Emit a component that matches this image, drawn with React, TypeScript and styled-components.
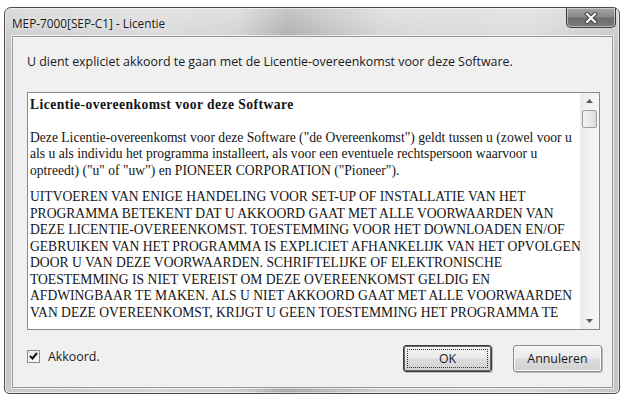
import React from "react";
import styled, { createGlobalStyle } from "styled-components";

const Global = createGlobalStyle`
  html, body { margin: 0; padding: 0; background: #ffffff; overflow: hidden; }
  #root { width: 623px; height: 395px; }
`;

const uiFont = `"Open Sans", "Noto Sans", "DejaVu Sans", sans-serif`;
const serifFont = `"Liberation Serif", "Times New Roman", serif`;

const Window = styled.div`
  box-sizing: border-box;
  margin: 7px 0 0 4px;
  width: 616px;
  height: 387px;
  border: 1px solid #4c4c4c;
  border-radius: 7px 7px 5px 5px;
  background:
    linear-gradient(180deg, rgba(255,255,255,0.35) 0%, rgba(255,255,255,0) 40px),
    linear-gradient(90deg, #c9c9c9 0%, #d6d6d6 25%, #cfcfcf 38%, #a9a9a9 46%, #b9b9b9 52%, #d3d3d3 62%, #d8d8d8 85%, #c6c6c6 100%);
  box-shadow: inset 0 0 0 1px rgba(255,255,255,0.55);
  display: flex;
  flex-direction: column;
  padding: 0 6px 5px 7px;
`;

const TitleBar = styled.div`
  height: 28px;
  display: flex;
  align-items: flex-start;
  justify-content: space-between;
  margin-right: -3px;
`;

const Title = styled.span`
  font-family: ${uiFont};
  font-size: 11.8px;
  color: #1a1a1a;
  padding-top: 7px;
  text-shadow: 0 0 6px rgba(255,255,255,0.9);
`;

const CloseButton = styled.div`
  width: 50px;
  height: 20px;
  box-sizing: border-box;
  border: 1px solid #3e3e3e;
  border-top: none;
  border-radius: 0 0 5px 5px;
  background: linear-gradient(180deg, #a4a4a4 0%, #8a8a8a 45%, #6c6c6c 55%, #7c7c7c 100%);
  box-shadow: inset 0 0 0 1px rgba(255,255,255,0.45);
  display: flex;
  align-items: center;
  justify-content: center;
`;

const Client = styled.div`
  flex: 1;
  box-sizing: border-box;
  border: 1px solid #9a9a9a;
  background: #f0f0f0;
  box-shadow: 0 0 0 1px rgba(255,255,255,0.6);
  display: flex;
  flex-direction: column;
  padding: 17px 12px 0 14px;
`;

const Intro = styled.div`
  font-family: ${uiFont};
  font-size: 12.4px;
  line-height: 16px;
  color: #1a1a1a;
  margin-bottom: 22px;
`;

const TextBox = styled.div`
  box-sizing: border-box;
  height: 238px;
  border: 1px solid #8a8a8a;
  background: #ffffff;
  display: flex;
  overflow: hidden;
`;

const TextContent = styled.div`
  flex: 1;
  padding: 4px 0 0 2px;
  font-family: ${serifFont};
  font-size: 13.6px;
  line-height: 16.5px;
  color: #141414;
  white-space: nowrap;
  overflow: hidden;
`;

const Heading = styled.div`
  font-weight: bold;
  letter-spacing: 0.45px;
  margin-bottom: 16px;
`;

const Para = styled.p`
  margin: 0 0 10px 0;
`;

const ScrollBar = styled.div`
  width: 17px;
  background: linear-gradient(90deg, #ececec, #f7f7f7);
  display: flex;
  flex-direction: column;
  align-items: center;
  padding: 0 1px;
`;

const ArrowBox = styled.div`
  height: 16px;
  display: flex;
  align-items: center;
  justify-content: center;
  width: 100%;
`;

const Thumb = styled.div`
  box-sizing: border-box;
  width: 15px;
  height: 18px;
  margin-top: 1px;
  border: 1px solid #9c9c9c;
  border-radius: 2px;
  background: linear-gradient(90deg, #f4f4f4, #dcdcdc);
`;

const Spacer = styled.div`
  flex: 1;
`;

const BottomRow = styled.div`
  display: flex;
  align-items: center;
  margin-top: 15px;
  margin-right: -2px;
`;

const CheckLabel = styled.label`
  display: flex;
  align-items: center;
  gap: 8px;
  font-family: ${uiFont};
  font-size: 12.4px;
  color: #1a1a1a;
  margin-top: -5px;
`;

const CheckBox = styled.span`
  box-sizing: border-box;
  width: 13px;
  height: 13px;
  border: 1px solid #8a8a8a;
  background: linear-gradient(135deg, #e6e6e6, #fbfbfb);
  display: flex;
  align-items: center;
  justify-content: center;
`;

const Buttons = styled.div`
  margin-left: auto;
  display: flex;
  gap: 21px;
`;

const Button = styled.div<{ $default?: boolean }>`
  box-sizing: border-box;
  width: 89px;
  height: 27px;
  border: 1px solid ${(p) => (p.$default ? "#3a3a3a" : "#8a8a8a")};
  border-radius: 3px;
  background: linear-gradient(180deg, #f4f4f4 0%, #ebebeb 48%, #dcdcdc 52%, #d2d2d2 100%);
  box-shadow: ${(p) =>
    p.$default
      ? "inset 0 0 0 1px #6a6a6a, 1px 1px 0 #bdbdbd"
      : "inset 0 0 0 1px #fbfbfb, 1px 1px 0 #bdbdbd"};
  font-family: ${uiFont};
  font-size: 12.4px;
  color: #1a1a1a;
  display: flex;
  align-items: center;
  justify-content: center;
  padding: 3px;
`;

const FocusRect = styled.div`
  flex: 1;
  align-self: stretch;
  border: 1px dotted #333;
  display: flex;
  align-items: center;
  justify-content: center;
`;

export default function App() {
  return (
    <>
      <Global />
      <Window>
        <TitleBar>
          <Title>MEP-7000[SEP-C1] - Licentie</Title>
          <CloseButton>
            <svg width="14" height="12" viewBox="0 0 14 12">
              <path d="M3 2 L11 10 M11 2 L3 10" stroke="#3a3a3a" strokeWidth="4" strokeLinecap="square" />
              <path d="M3 2 L11 10 M11 2 L3 10" stroke="#ffffff" strokeWidth="2.2" strokeLinecap="square" />
            </svg>
          </CloseButton>
        </TitleBar>
        <Client>
          <Intro>U dient expliciet akkoord te gaan met de Licentie-overeenkomst voor deze Software.</Intro>
          <TextBox>
            <TextContent>
              <Heading>Licentie-overeenkomst voor deze Software</Heading>
              <Para>
                Deze Licentie-overeenkomst voor deze Software ("de Overeenkomst") geldt tussen u (zowel voor u
                <br />
                als u als individu het programma installeert, als voor een eventuele rechtspersoon waarvoor u
                <br />
                optreedt) ("u" of "uw") en PIONEER CORPORATION ("Pioneer").
              </Para>
              <Para>
                UITVOEREN VAN ENIGE HANDELING VOOR SET-UP OF INSTALLATIE VAN HET
                <br />
                PROGRAMMA BETEKENT DAT U AKKOORD GAAT MET ALLE VOORWAARDEN VAN
                <br />
                DEZE LICENTIE-OVEREENKOMST. TOESTEMMING VOOR HET DOWNLOADEN EN/OF
                <br />
                GEBRUIKEN VAN HET PROGRAMMA IS EXPLICIET AFHANKELIJK VAN HET OPVOLGEN
                <br />
                DOOR U VAN DEZE VOORWAARDEN. SCHRIFTELIJKE OF ELEKTRONISCHE
                <br />
                TOESTEMMING IS NIET VEREIST OM DEZE OVEREENKOMST GELDIG EN
                <br />
                AFDWINGBAAR TE MAKEN. ALS U NIET AKKOORD GAAT MET ALLE VOORWAARDEN
                <br />
                VAN DEZE OVEREENKOMST, KRIJGT U GEEN TOESTEMMING HET PROGRAMMA TE
              </Para>
            </TextContent>
            <ScrollBar>
              <ArrowBox>
                <svg width="7" height="4" viewBox="0 0 7 4">
                  <path d="M0 4 L3.5 0 L7 4 Z" fill="#5a5a5a" />
                </svg>
              </ArrowBox>
              <Thumb />
              <Spacer />
              <ArrowBox>
                <svg width="7" height="4" viewBox="0 0 7 4">
                  <path d="M0 0 L7 0 L3.5 4 Z" fill="#5a5a5a" />
                </svg>
              </ArrowBox>
            </ScrollBar>
          </TextBox>
          <BottomRow>
            <CheckLabel>
              <CheckBox>
                <svg width="9" height="8" viewBox="0 0 9 8">
                  <path d="M1 4 L3.5 6.5 L8 1" stroke="#111" strokeWidth="2" fill="none" />
                </svg>
              </CheckBox>
              Akkoord.
            </CheckLabel>
            <Buttons>
              <Button $default>
                <FocusRect>OK</FocusRect>
              </Button>
              <Button>Annuleren</Button>
            </Buttons>
          </BottomRow>
        </Client>
      </Window>
    </>
  );
}
